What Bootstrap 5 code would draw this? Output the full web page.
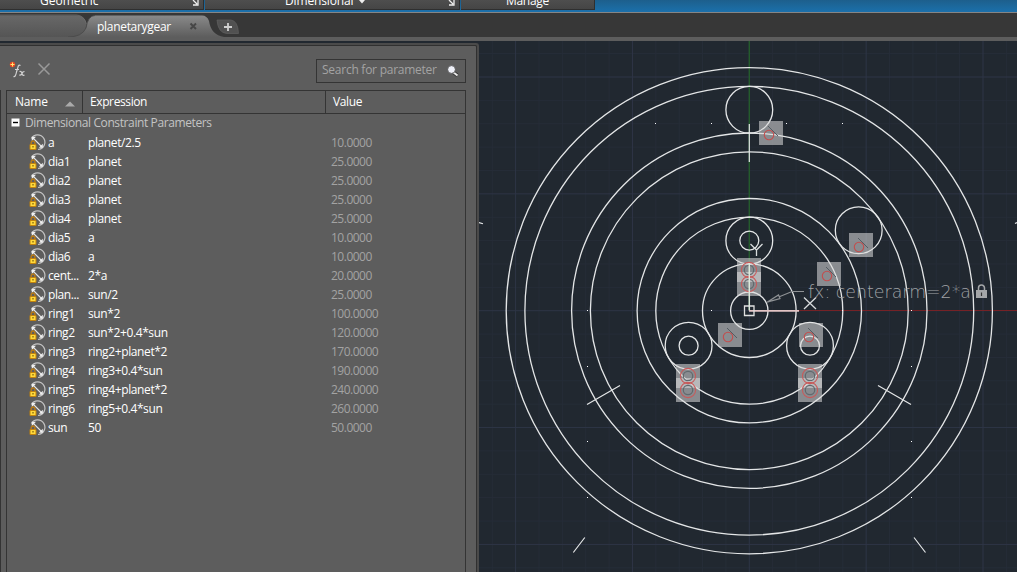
<!DOCTYPE html>
<html lang="en">
<head>
<meta charset="utf-8">
<title>planetarygear</title>
<link href="https://cdn.jsdelivr.net/npm/bootstrap@5.3.0/dist/css/bootstrap.min.css" rel="stylesheet">
<style>
body{width:1017px;height:572px;overflow:hidden;background:#212830;font:12px/19px "Open Sans","Noto Sans",sans-serif;letter-spacing:-.39px;color:#fff}
svg{display:block;flex:none}
.ribbon{height:13px;background:linear-gradient(#1d5f8c,#1b70ab);border-bottom:1px solid #858585}
.ribbon-panel{height:10px;background:linear-gradient(#4e4e4e,#454545);border:solid #2f2f2f;border-width:0 1px 1px 0;overflow:hidden}
.ribbon-panel span{display:block;line-height:16px;margin-top:-7px;white-space:nowrap}
.tabstrip{height:24px;background:#373737}
.seam{height:4px;background:#5d5d5d}
.palette{width:479px;height:530px;margin-top:2px;background:#5d5d5d;border:solid #4a4a4a;border-width:2px 2px 0 0;border-radius:0 3px 0 0;box-shadow:inset -1px 1px 0 #303030}
.tools{height:45px;padding:0 11px 0 9px}
.search-box{width:150px;height:24px;margin-top:14px;border:1px solid #343434;color:#a3a3a3;padding:0 5px;letter-spacing:-.25px;line-height:20px}
.param-table{width:460px;height:490px;margin-left:5px;border:1px solid #343434}
.edge-rail{width:1px;height:490px;background:#343434}
.head-row{height:23px;line-height:22px;border-bottom:1px solid #343434}
.c-name{width:76px;padding-left:8px;border-right:1px solid #343434}
.c-expr{width:243px;padding-left:7px;border-right:1px solid #343434}
.c-val{padding-left:7px}
.group-row{height:19px;line-height:18px;color:#c4c4c4;padding-left:4px}
.param-row{height:19px}
.p-name{width:40px;margin-left:2px;white-space:nowrap}
.p-expr{width:243px}
.p-val{color:#a3a3a3;letter-spacing:-.5px}
.file-name{left:97px;top:4px;letter-spacing:-.3px}
</style>
</head>
<body>
<div class="ribbon d-flex">
  <div class="ribbon-panel d-flex" style="width:204px"><span style="margin-left:40px;letter-spacing:0">Geometric</span><svg class="ms-auto me-1" width="7" height="7"><path d="M1 0l4 4M6 0v5H1" fill="none" stroke="#eee" stroke-width="1.300"/></svg></div>
  <div class="ribbon-panel d-flex" style="width:255px;margin-left:1px"><span style="margin-left:80px;letter-spacing:-.15px">Dimensional</span><svg width="16" height="6"><path d="M6 0h6L9 3.500z" fill="#eee"/></svg><svg class="ms-auto me-1" width="7" height="7"><path d="M1 0l4 4M6 0v5H1" fill="none" stroke="#eee" stroke-width="1.300"/></svg></div>
  <div class="ribbon-panel d-flex" style="width:134px;margin-left:1px"><span style="margin-left:45px;letter-spacing:-.3px">Manage</span></div>
</div>
<div class="tabstrip d-flex position-relative">
  <svg width="250" height="24" viewBox="0 13 250 24">
    <defs><linearGradient id="t" x2="0" y2="1"><stop stop-color="#8a8a8a"/><stop offset="1" stop-color="#5d5d5d"/></linearGradient>
    <linearGradient id="u" x2="0" y2="1"><stop stop-color="#686868"/><stop offset="1" stop-color="#555"/></linearGradient></defs>
    <path d="M0 15.500H76Q85 15.500 86.500 24L84 37H0z" fill="url(#u)"/><path d="M0 15H76Q84 15 86.500 24" fill="none" stroke="#777" stroke-width=".7"/>
    <path d="M68 37Q82 37 86 28Q88 15.500 95 15.500H202Q207 15.500 209 21Q211 35 224 37z" fill="url(#t)"/>
    <path d="M68 37Q82 37 86 28Q88 15.500 95 15.500" fill="none" stroke="#484848" stroke-width=".8"/>
    <path d="M190.500 23.500l5.500 5.500m0-5.500l-5.500 5.500" stroke="#464646" stroke-width="1.900"/>
    <path d="M217 20H231Q238 21 238.500 33.500H227Q218 33 217 20z" fill="#515151" stroke="#606060" stroke-width=".7"/>
    <path d="M228 23v8m-4-4h8" stroke="#d0d0d0" stroke-width="1.800"/>
  </svg>
  <span class="position-absolute file-name">planetarygear</span>
</div>
<div class="seam"></div>
<main class="d-flex">
  <section class="palette flex-shrink-0">
    <div class="tools d-flex">
      <svg width="44" height="40" viewBox="9 45 44 40"><circle cx="12.500" cy="64.500" r="2.700" fill="#ed4922"/><path d="M12.500 62.500v4m-2-2h4" stroke="#ffe873" stroke-width="1"/><path d="M13.500 76.500Q15.500 77.500 16.500 72L18 67Q18.500 64.500 20.500 65.500M15 69.500h4M19.500 71.500q2-.5 2.500 2t2.500 1.500M24.500 71.500q-2 0-2.500 2t-2.800 1.500" fill="none" stroke="#d2d2d2" stroke-width="1.200"/><path d="M38.500 63.500l11 11m0-11l-11 11" stroke="#999" stroke-width="1.500"/></svg>
      <div class="search-box ms-auto d-flex"><span>Search for parameter</span><svg class="ms-auto" width="14" height="22" viewBox="447 60 14 22"><path d="M454 72l4.500 3.500" stroke="#333" stroke-width="3.500"/><path d="M454 72l4.500 3.500" stroke="#e8e8e8" stroke-width="2"/><circle cx="452.500" cy="69.500" r="3.900" fill="#eef0f8" stroke="#444" stroke-width=".8"/></svg></div>
    </div>
    <div class="d-flex">
      <div class="edge-rail"></div>
      <div class="param-table">
        <div class="head-row d-flex"><div class="c-name d-flex"><span style="letter-spacing:-.2px">Name</span><svg class="ms-auto me-1" width="16" height="22"><path d="M3 15.500l5-5 5 5z" fill="#aaa"/></svg></div><div class="c-expr">Expression</div><div class="c-val">Value</div></div>
        <div class="group-row d-flex"><svg width="14" height="19"><path d="M.5 4.500h8v8h-8z" fill="#fff"/><path d="M2 8.500h5" stroke="#000" stroke-width="1.400"/></svg><span>Dimensional Constraint Parameters</span></div>
        <div id="rows"></div>
      </div>
    </div>
  </section>
  <svg id="cad" width="538" height="531" viewBox="479 41 538 531"></svg>
</main>
<script src="https://cdn.jsdelivr.net/npm/bootstrap@5.3.0/dist/js/bootstrap.bundle.min.js"></script>
<script>
const icon='<svg width="17" height="19" viewBox="0 0 17 19" style="margin-left:22px"><path d="M2.300 5.500A7.300 7.300 0 1 1 9 16.500" fill="none" stroke="#c4c4c4" stroke-width="1.200"/><path d="M3.500 4.500L13 14" fill="none" stroke="#e4e4e4" stroke-width="1.100"/><path d="M2.800 3.800h4.200l-4.200 4.200zM13.800 14.800h-4l4-4z" fill="#f0f0f0"/><path d="M2.200 12V9.500a1.900 1.900 0 0 1 3.700 0V12" fill="none" stroke="#b97b17" stroke-width="1.400"/><path d="M1 11.500h6v5H1z" fill="#ffd83b" stroke="#c0820e"/><path d="M4 13v1.500" stroke="#5b4300"/></svg>';
const data=[['a','planet/2.5','10'],['dia1','planet','25'],['dia2','planet','25'],['dia3','planet','25'],['dia4','planet','25'],['dia5','a','10'],['dia6','a','10'],['cent...','2*a','20'],['plan...','sun/2','25'],['ring1','sun*2','100'],['ring2','sun*2+0.4*sun','120'],['ring3','ring2+planet*2','170'],['ring4','ring3+0.4*sun','190'],['ring5','ring4+planet*2','240'],['ring6','ring5+0.4*sun','260'],['sun','50','50']];
document.getElementById('rows').innerHTML=data.map(([n,e,v])=>`<div class="param-row d-flex">${icon}<div class="p-name">${n}</div><div class="p-expr">${e}</div><div class="p-val">${v}.0000</div></div>`).join('');

// Drawing: planetary gear centred on the world origin
const cx=749.3,cy=310.7;let s='<rect x="478" y="41" width="539" height="531" fill="#212830"/>';
for(const major of [false,true])for(let i=-11;i<=11;i++){if((i%5===0)!==major)continue;const x=cx+i*23.37,y=cy+i*23.37;
 s+=`<path d="M${x} 41V572M478 ${y}H1017" stroke="${major?'#2e3546':'#262d38'}" stroke-width="1"/>`}
s+='<path d="M749.300 41V310" stroke="#245b2b" stroke-width="1.400"/><path d="M749 310.500H1017" stroke="#762226" stroke-width="1"/>';
const circ=(x,y,r)=>{s+=`<circle cx="${x}" cy="${y}" r="${r}" fill="none" stroke="#e4e6e7" stroke-width="1.300"/>`};
[243.1,224.4,177.7,158.9,112.2,93.5,46.8,18.7].forEach(r=>circ(cx,cy,r));
[[749.3,240.6],[688.6,345.7],[810,345.7]].forEach(([x,y])=>{circ(x,y,23.4);circ(x,y,9.5)});
circ(749.3,109.8,23.4);circ(858.7,230.3,23.4);
s+='<path d="M749.300 124V162M587 404.500L620 385.500M911 404.500L878 385.500M573.300 552.500L584.800 537.500M925.500 552.500L914 537.500M479 222.500l4 1.200M1017 222.500l-2 1" stroke="#e4e6e7" stroke-width="1.200"/>';
[[655,123],[711,123],[786,123],[842,123],[587,441],[587,497],[911,441],[911,497],[587,366],[911,366],[911,310],[786,310],[711,310],[842,310],[587,310]].forEach(([x,y])=>{s+=`<path d="M${x} ${y}h1v1h-1z" fill="#fff"/>`});
const box=(x,y)=>{s+=`<rect x="${x}" y="${y}" width="24" height="24" fill="#dcdcdc" fill-opacity=".56"/>`};
[[759,121],[849,233],[817,262],[718,323],[799,323]].forEach(([x,y])=>{box(x,y);s+=`<circle cx="${x+10}" cy="${y+14}" r="4.700" fill="none" stroke="#c24e4e" stroke-width="1.100"/><path d="M${x+9} ${y+5}l10 10" stroke="#555d63" stroke-width="1"/>`});
[[737,258],[676,364],[798,364]].forEach(([x,y])=>{box(x,y);box(x,y+14);[12,26].forEach(d=>s+=`<circle cx="${x+12}" cy="${y+d}" r="7.600" fill="none" stroke="#c75b5b" stroke-width="1.100"/><circle cx="${x+12}" cy="${y+d}" r="4.700" fill="none" stroke="#61696e" stroke-width="1.200"/>`)});
s+='<path d="M749.300 263V310.500" stroke="#dce8dc" stroke-width="1.500"/><path d="M749 310.800H799" stroke="#e3c4c4" stroke-width="1.800"/><path d="M744.500 306h9.500v9.500h-9.500z" fill="none" stroke="#e1e1e1" stroke-width="1.300"/><path d="M750.500 244l6 6 6-6M756.500 250v6M804 297.500l12 11.500m0-11.500l-12 11.500" fill="none" stroke="#d9dcde" stroke-width="1.300"/>';
s+='<g fill="none" stroke="#8f9295" stroke-width="1.200"><path d="M804 291.500H792L779.300 296.800M767 302.200l11.500-7.200 1.500 3.500z"/></g>';
s+='<text x="808" y="298" textLength="163" lengthAdjust="spacingAndGlyphs" letter-spacing="0" font-family="DejaVu Sans" font-weight="200" font-size="17.500" fill="#a0a3a6">fx: centerarm=2*a</text>';
s+='<path d="M978.500 291v-3a3 3 0 0 1 6 0v3" fill="none" stroke="#a4a6a8" stroke-width="1.500"/><path d="M976 290h11v8h-11z" fill="#a4a6a8"/><path d="M981.500 292.500v3.500" stroke="#333" stroke-width="1.200"/>';
document.getElementById('cad').innerHTML=s;
</script>
</body>
</html>
